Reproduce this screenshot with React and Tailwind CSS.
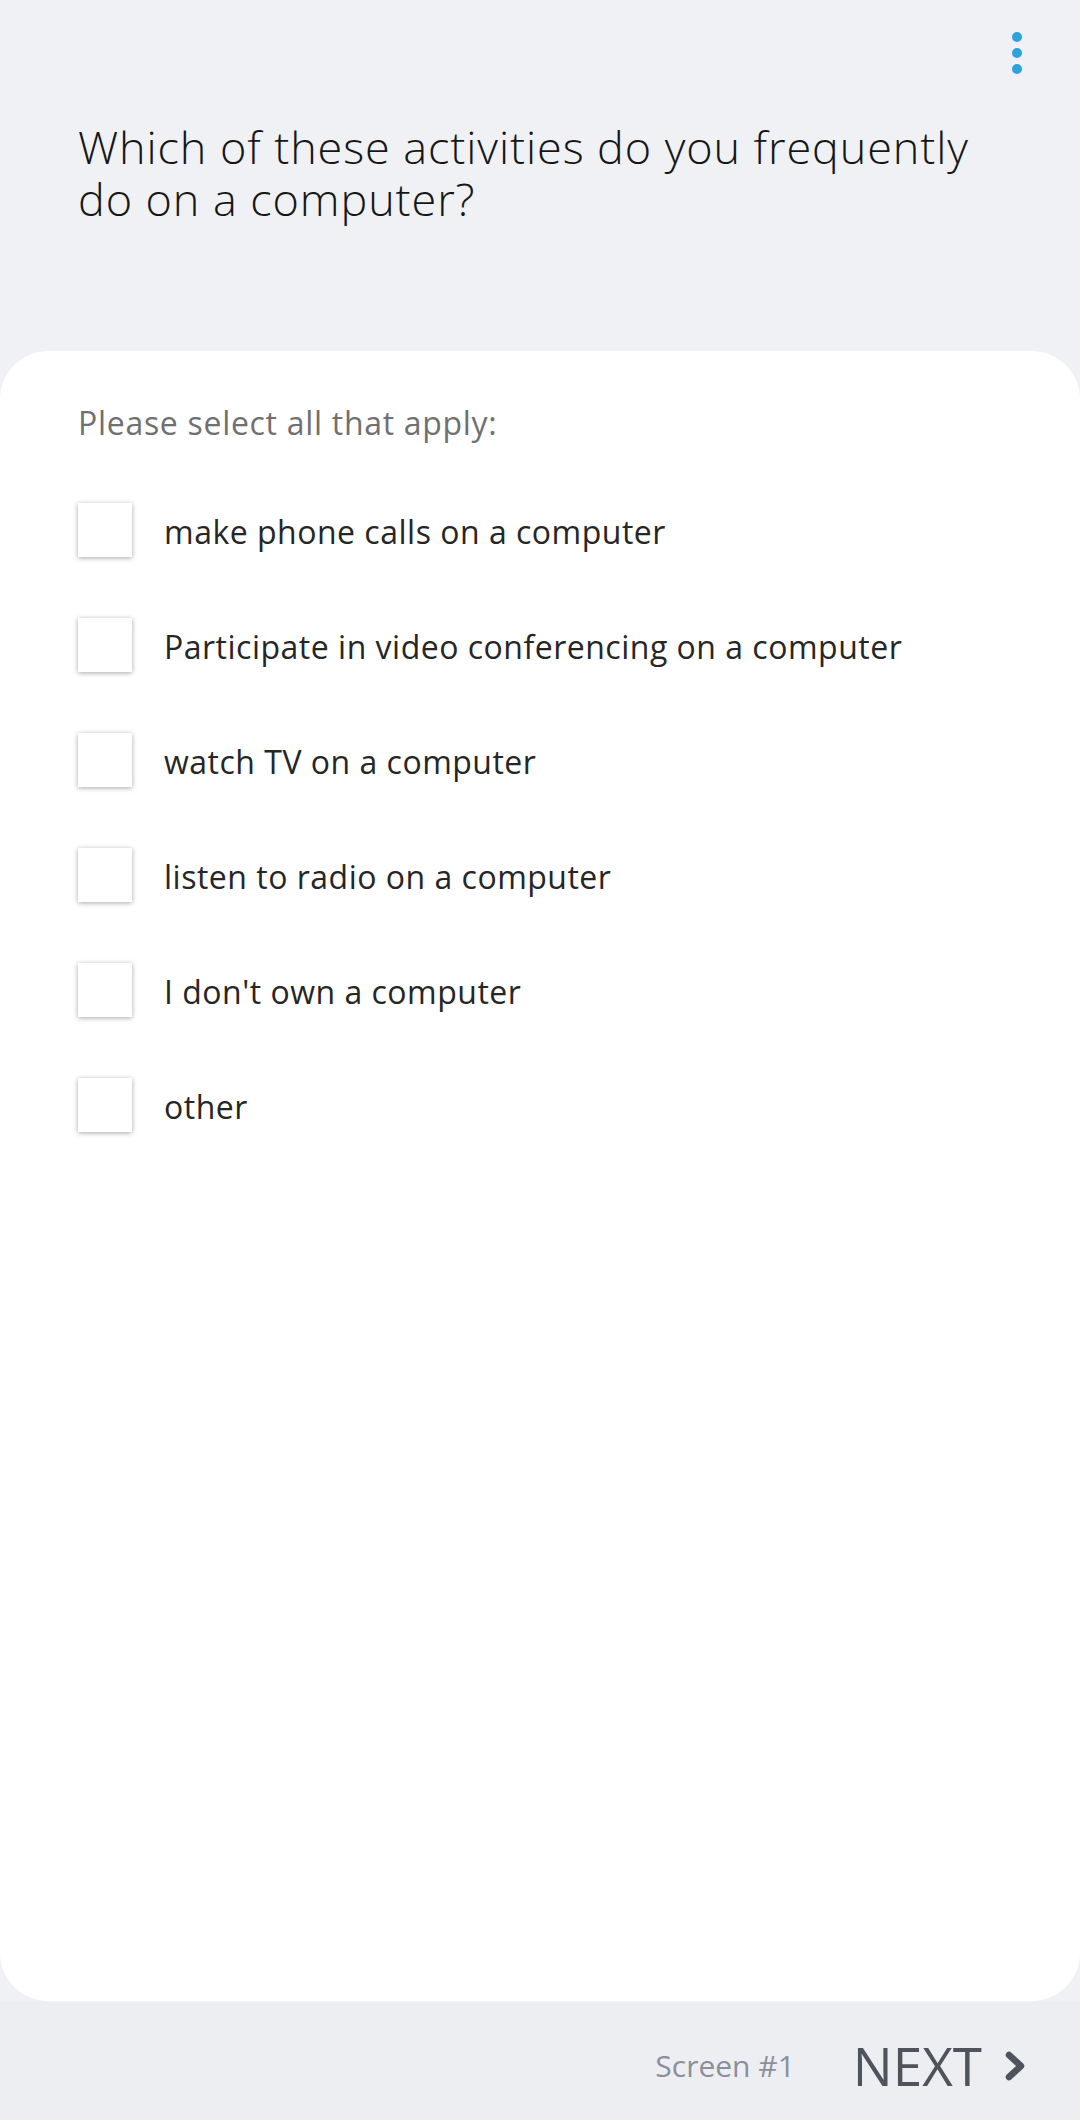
import React from "react";

const options = [
  "make phone calls on a computer",
  "Participate in video conferencing on a computer",
  "watch TV on a computer",
  "listen to radio on a computer",
  "I don't own a computer",
  "other",
];

export default function App() {
  return (
    <div className="w-full min-h-[2120px] bg-[#eff1f5] flex flex-col font-['Open_Sans',sans-serif]">
      {/* header with menu + question */}
      <div className="h-[351px] pt-[32px] flex flex-col">
        <div className="flex justify-end pr-[58px]">
          <button className="flex flex-col gap-[6px]">
            <span className="w-[10px] h-[10px] rounded-full bg-[#2aa2dc]" />
            <span className="w-[10px] h-[10px] rounded-full bg-[#2aa2dc]" />
            <span className="w-[10px] h-[10px] rounded-full bg-[#2aa2dc]" />
          </button>
        </div>
        <h1 className="mt-[47px] px-[78px] text-[45px] leading-[52px] font-light text-[#161616] tracking-[0.9px]">
          Which of these activities do you frequently
          <br />
          do on a computer?
        </h1>
      </div>

      {/* answers card */}
      <div className="h-[1650px] bg-white rounded-[48px] px-[78px] pt-[54px]">
        <p className="text-[32px] leading-[36px] text-[#707070] tracking-[0.7px]">Please select all that apply:</p>
        <div className="mt-[62px] flex flex-col gap-[61px]">
          {options.map((opt) => (
            <label key={opt} className="flex items-center gap-[32px] h-[54px]">
              <span className="w-[54px] h-[54px] shrink-0 bg-white shadow-[0_1px_5px_rgba(0,0,0,0.35)]" />
              <span className="pt-[4px] text-[32px] leading-[40px] text-[#262626] tracking-[0.5px]">{opt}</span>
            </label>
          ))}
        </div>
      </div>

      {/* footer nav */}
      <div className="h-[119px] pt-[10px] flex items-center justify-end pr-[55px] bg-[#eceef2]">
        <span className="text-[30px] text-[#8a909a]">Screen #1</span>
        <button className="ml-[58px] flex items-center gap-[23px] text-[#4f535c]">
          <span className="text-[53px] leading-none">NEXT</span>
          <svg width="20" height="30" viewBox="0 0 20 30" fill="none">
            <polyline points="4,4 16,15 4,26" stroke="#4f535c" strokeWidth="6.5" strokeLinecap="round" strokeLinejoin="round" />
          </svg>
        </button>
      </div>
    </div>
  );
}
